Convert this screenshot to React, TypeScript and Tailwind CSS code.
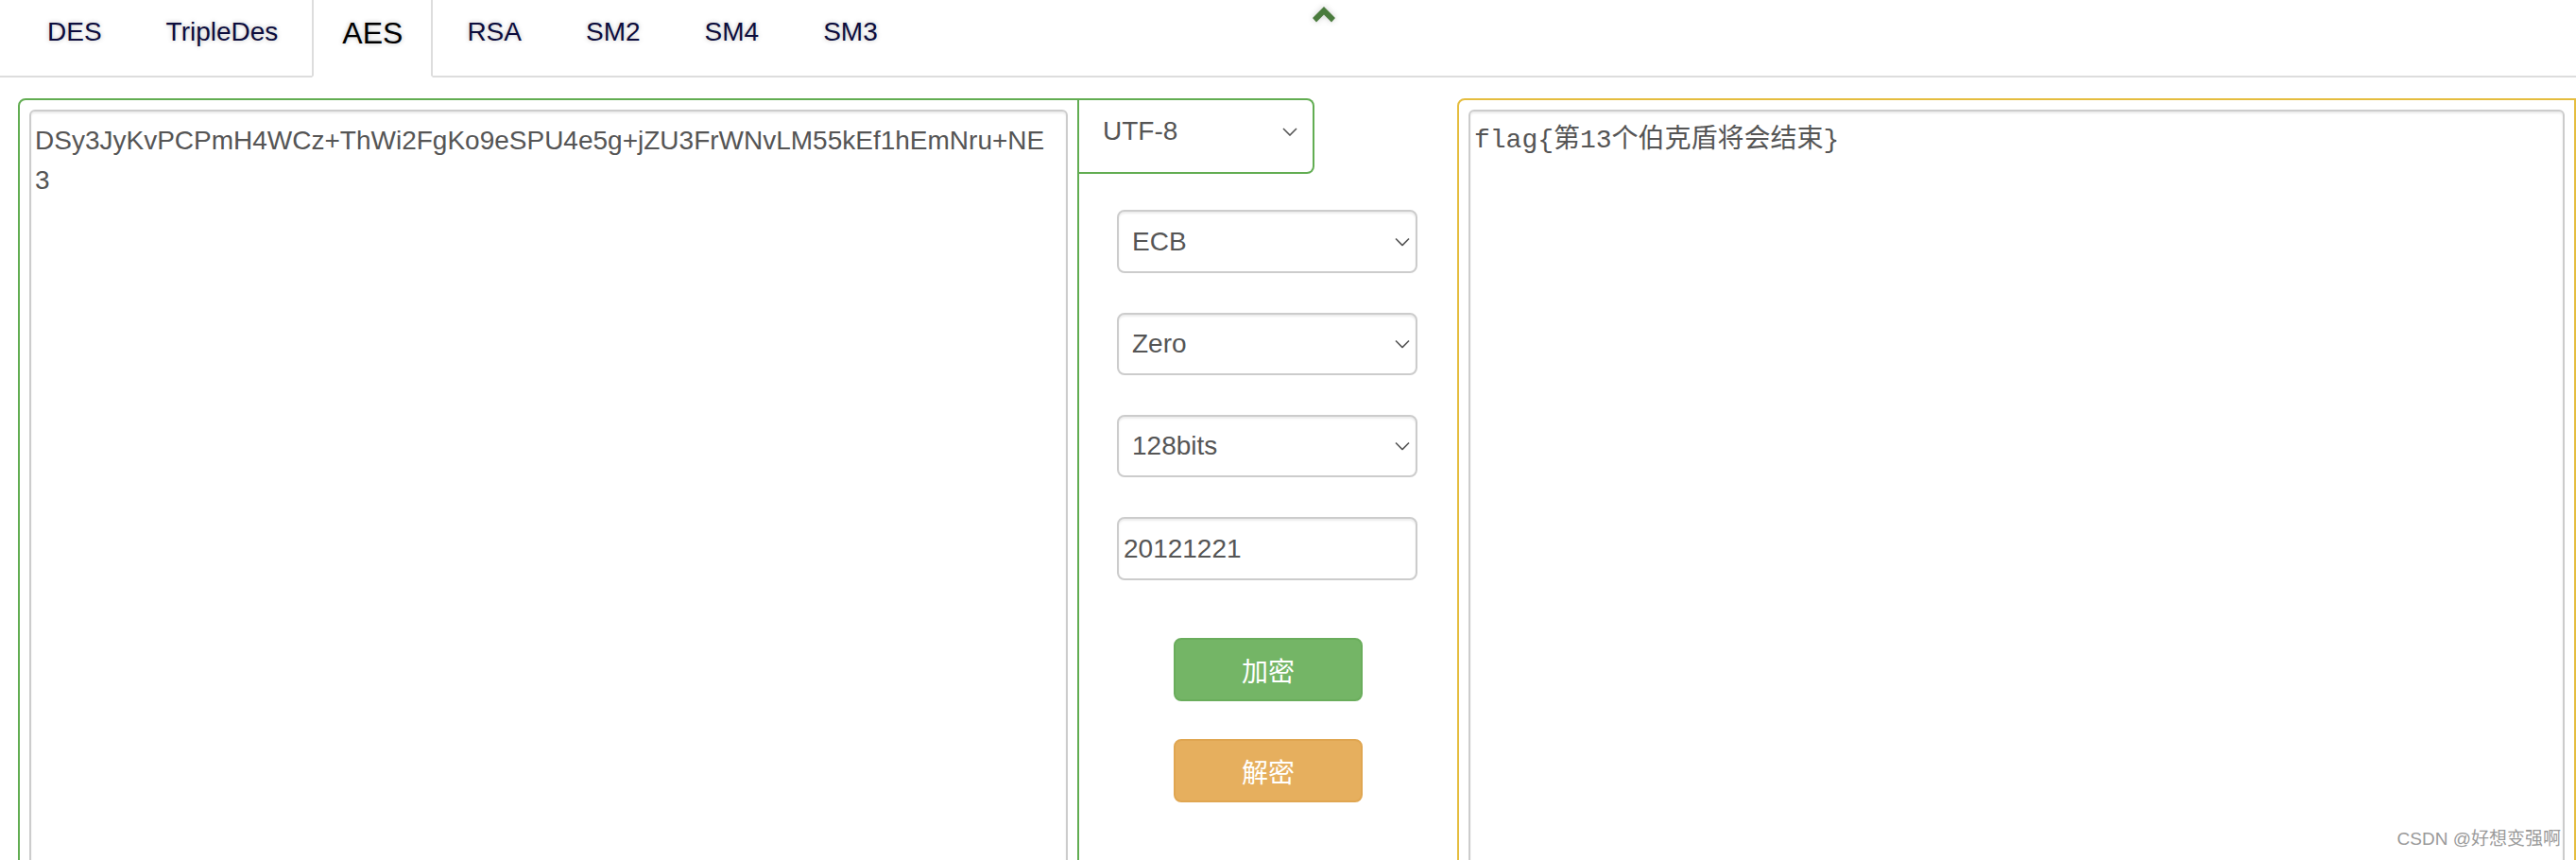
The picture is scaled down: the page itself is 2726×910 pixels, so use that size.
import React from "react";

const tabs = ["DES", "TripleDes", "AES", "RSA", "SM2", "SM4", "SM3"];

const cipherText =
  "DSy3JyKvPCPmH4WCz+ThWi2FgKo9eSPU4e5g+jZU3FrWNvLM55kEf1hEmNru+NE3";

function Chevron() {
  return (
    <svg width="16" height="9" viewBox="0 0 16 9" className="pointer-events-none absolute right-[8px] top-1/2 -translate-y-1/2">
      <path d="M1 1 L8 8 L15 1" fill="none" stroke="#555" strokeWidth="1.6" />
    </svg>
  );
}

function Select({ value, className }: { value: string; className?: string }) {
  return (
    <div className={"relative " + (className ?? "")}>
      <select
        value={value}
        onChange={() => {}}
        className="w-full h-full appearance-none bg-white border-2 border-[#ccc] rounded-[8px] pl-[14px] text-[28px] text-[#555] shadow-[inset_0_2px_2px_rgba(0,0,0,0.075)] outline-none"
      >
        <option>{value}</option>
      </select>
      <Chevron />
    </div>
  );
}

export default function App() {
  return (
    <div className="relative w-[2726px] h-[910px] overflow-hidden bg-white font-['Liberation_Sans','Noto_Sans_CJK_SC',sans-serif]">
      <div className="relative">
        <ul className="flex h-[82px] border-b-2 border-[#ddd] pl-[18px]">
          {tabs.map((t) => {
            const active = t === "AES";
            return (
              <li key={t} className="mr-[4px] -mb-[2px]">
                <a
                  className={
                    "block h-[82px] px-[30px] border-x-2 border-b-2 [text-shadow:0_0_5px_rgba(0,0,0,0.25)] " +
                    (active
                      ? "bg-white border-[#ddd] border-b-white text-black text-[32px] pt-[15px] leading-[40px]"
                      : "border-transparent text-[#0c0c3c] text-[28px] pt-[14px] leading-[40px]")
                  }
                >
                  {t}
                </a>
              </li>
            );
          })}
        </ul>
        <svg
          width="24"
          height="17"
          viewBox="0 0 24 17"
          className="absolute left-[1389px] top-[7px] drop-shadow-[0_0_3px_rgba(0,0,0,0.2)]"
        >
          <polygon points="12,0 24,12 20,16.5 12,8.5 4,16.5 0,12" fill="#4a7b3d" />
        </svg>
      </div>

      <div className="flex mt-[22px] pl-[19px]">
        <div className="w-[1123px] h-[840px] border-2 border-[#62ad52] rounded-tl-[8px] p-[10px]">
          <textarea
            readOnly
            value={cipherText}
            className="w-full h-[820px] resize-none border-2 border-[#ccc] rounded-[6px] pl-[4px] pr-[15px] pt-[10px] text-[28px] leading-[42px] text-[#555] shadow-[inset_0_2px_2px_rgba(0,0,0,0.075)] outline-none font-['Liberation_Sans',sans-serif]"
          />
        </div>

        <div className="w-[400px] flex flex-col">
          <div className="relative w-[249px] h-[80px]">
            <select
              value="UTF-8"
              onChange={() => {}}
              className="w-full h-full appearance-none bg-white border-2 border-l-0 border-[#62ad52] rounded-r-[8px] pl-[25px] pb-[10px] text-[28px] text-[#555] outline-none"
            >
              <option>UTF-8</option>
            </select>
            <svg width="16" height="9" viewBox="0 0 16 9" className="pointer-events-none absolute right-[18px] top-[31px]">
              <path d="M1 1 L8 8 L15 1" fill="none" stroke="#555" strokeWidth="1.6" />
            </svg>
          </div>
          <div className="flex flex-col gap-[42px] pl-[40px] mt-[38px]">
            <Select value="ECB" className="w-[318px] h-[67px]" />
            <Select value="Zero" className="w-[318px] h-[66px]" />
            <Select value="128bits" className="w-[318px] h-[66px]" />
            <input
              readOnly
              value="20121221"
              className="w-[318px] h-[67px] border-2 border-[#ccc] rounded-[8px] pl-[5px] text-[28px] text-[#555] shadow-[inset_0_2px_2px_rgba(0,0,0,0.075)] outline-none"
            />
          </div>
          <div className="flex flex-col items-center gap-[40px] mt-[61px]">
            <button className="w-[200px] h-[67px] rounded-[8px] bg-[#74b566] border-2 border-[#6aad5c] text-white text-[28px] font-['Noto_Sans_CJK_SC',sans-serif]">
              加密
            </button>
            <button className="w-[200px] h-[67px] rounded-[8px] bg-[#e6af5e] border-2 border-[#e0a651] text-white text-[28px] font-['Noto_Sans_CJK_SC',sans-serif]">
              解密
            </button>
          </div>
        </div>

        <div className="w-[1184px] h-[840px] border-2 border-[#e5bd3f] rounded-tl-[8px] p-[10px]">
          <textarea
            readOnly
            value="flag{第13个伯克盾将会结束}"
            className="w-full h-[820px] resize-none border-2 border-[#ccc] rounded-[6px] pl-[4px] pt-[10px] text-[28px] leading-[42px] text-[#555] shadow-[inset_0_2px_2px_rgba(0,0,0,0.075)] outline-none font-['Liberation_Mono','Noto_Sans_CJK_SC',monospace]"
          />
        </div>
      </div>

      <div className="absolute right-[16px] bottom-[8px] text-[19px] text-[#9a9a9a] [text-shadow:0_0_2px_#fff] font-['Liberation_Sans','Noto_Sans_CJK_SC',sans-serif]">
        CSDN @好想变强啊
      </div>
    </div>
  );
}
